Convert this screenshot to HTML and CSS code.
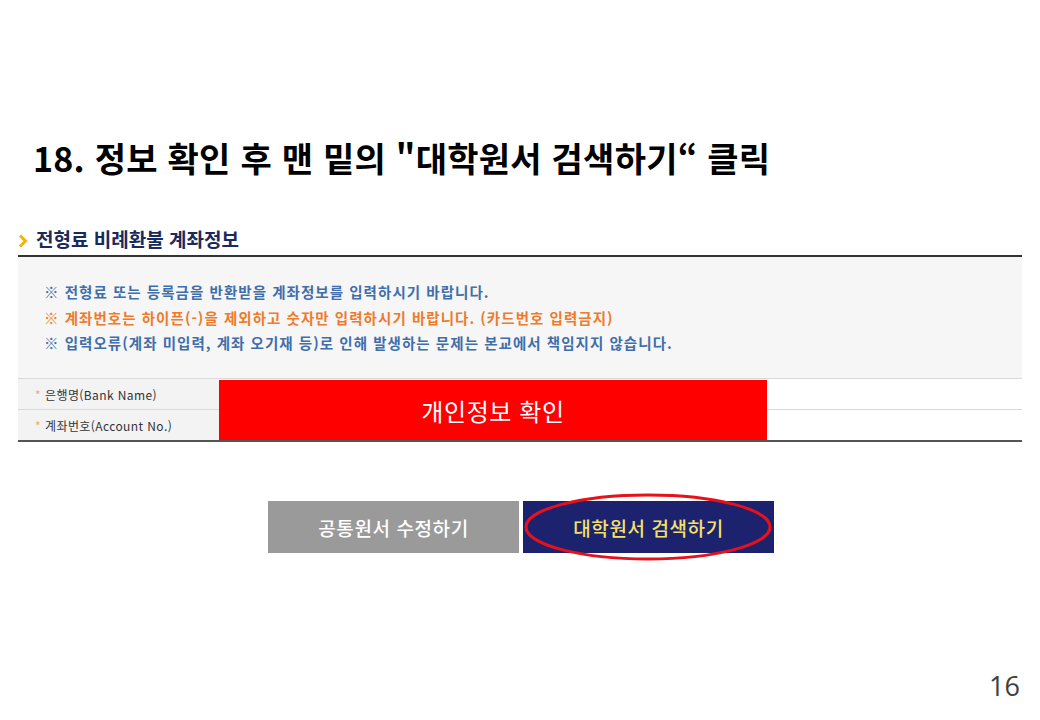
FILE: index.html
```html
<!DOCTYPE html>
<html lang="ko">
<head>
<meta charset="utf-8">
<link rel="stylesheet" href="styles.css">
</head>
<body>
<div class="slide">
  <h1 class="title">18. 정보 확인 후 맨 밑의 "대학원서 검색하기“ 클릭</h1>

  <div class="section">
    <div class="sec-head">
      <svg class="chev" width="10" height="14" viewBox="0 0 10 14"><polyline points="2,1.5 7.5,7 2,12.5" fill="none" stroke="#f4b400" stroke-width="3"/></svg>
      <span>전형료 비례환불 계좌정보</span>
    </div>
    <div class="notice">
      <p class="blue">※ 전형료 또는 등록금을 반환받을 계좌정보를 입력하시기 바랍니다.</p>
      <p class="orange">※ 계좌번호는 하이픈(-)을 제외하고 숫자만 입력하시기 바랍니다. (카드번호 입력금지)</p>
      <p class="blue">※ 입력오류(계좌 미입력, 계좌 오기재 등)로 인해 발생하는 문제는 본교에서 책임지지 않습니다.</p>
    </div>
    <div class="table">
      <div class="row">
        <div class="label"><span class="star">*</span> 은행명(Bank Name)</div>
        <div class="value"></div>
      </div>
      <div class="row last">
        <div class="label"><span class="star">*</span> 계좌번호(Account No.)</div>
        <div class="value"></div>
      </div>
      <div class="mask">개인정보 확인</div>
    </div>
  </div>

  <div class="buttons">
    <div class="btn gray">공통원서 수정하기</div>
    <div class="btn navy">대학원서 검색하기
      <svg class="circle" width="250" height="70" viewBox="0 0 250 70"><ellipse cx="125" cy="35" rx="122" ry="32" fill="none" stroke="#e5121b" stroke-width="3"/></svg>
    </div>
  </div>

  <div class="page-num">16</div>
</div>
</body>
</html>
```

FILE: styles.css
```css
html, body {
  margin: 0;
  padding: 0;
  background: #fff;
}

.slide {
  position: relative;
  width: 1040px;
  height: 720px;
  overflow: hidden;
  font-family: "Noto Sans CJK KR", "Noto Sans", sans-serif;
}

.title {
  margin: 0;
  padding: 138px 0 0 33px;
  font-size: 34px;
  line-height: 40px;
  font-weight: 700;
  color: #000;
  letter-spacing: 0.25px;
}

.section {
  margin: 49px 18px 0 18px;
}

.sec-head {
  display: flex;
  align-items: center;
  height: 28px;
  border-bottom: 2px solid #333;
  font-size: 19px;
  font-weight: 700;
  color: #1b2a5c;
  line-height: 26px;
}

.chev {
  margin: 0 8px 0 0;
  flex: none;
}

.sec-head span {
  position: relative;
  top: -2px;
}

.notice {
  background: #f6f6f6;
  padding: 22px 0 22px 26px;
  border-bottom: 1px solid #d9d9d9;
  height: 77px;
}

.notice p {
  margin: 0;
  font-size: 14.5px;
  line-height: 25.5px;
  font-weight: 700;
  letter-spacing: 1.05px;
}

.blue { color: #3f6eab; }
.orange { color: #ef7a2c; }

.table {
  position: relative;
  border-bottom: 2px solid #555;
}

.row {
  display: flex;
  height: 30px;
  border-bottom: 1px solid #d9d9d9;
}

.row.last {
  border-bottom: none;
  height: 30px;
}

.label {
  width: 184px;
  padding-left: 17px;
  background: #f3f3f3;
  font-size: 12px;
  letter-spacing: 0.4px;
  color: #333;
  display: flex;
  align-items: center;
}

.star {
  color: #f5a86c;
  margin-right: 4px;
}

.value {
  flex: 1;
  background: #fff;
}

.mask {
  position: absolute;
  left: 201px;
  top: 1px;
  width: 548px;
  height: 60px;
  background: #ff0000;
  color: #fff;
  font-size: 24px;
  display: flex;
  align-items: center;
  justify-content: center;
  letter-spacing: 0.6px;
}

.buttons {
  display: flex;
  justify-content: center;
  gap: 4px;
  margin-top: 59px;
  padding-left: 2px;
}

.btn {
  position: relative;
  width: 251px;
  height: 52px;
  display: flex;
  align-items: center;
  justify-content: center;
  font-size: 19px;
  font-weight: 500;
  letter-spacing: 0.6px;
}

.btn.gray {
  background: #9a9a9a;
  color: #fff;
}

.btn.navy {
  background: #1d226e;
  color: #f5e06a;
}

.circle {
  position: absolute;
  left: 0;
  top: -9px;
}

.page-num {
  position: absolute;
  right: 20px;
  bottom: 18px;
  font-family: "Open Sans", "Liberation Sans", sans-serif;
  font-size: 27px;
  color: #404040;
  line-height: 32px;
}
```
